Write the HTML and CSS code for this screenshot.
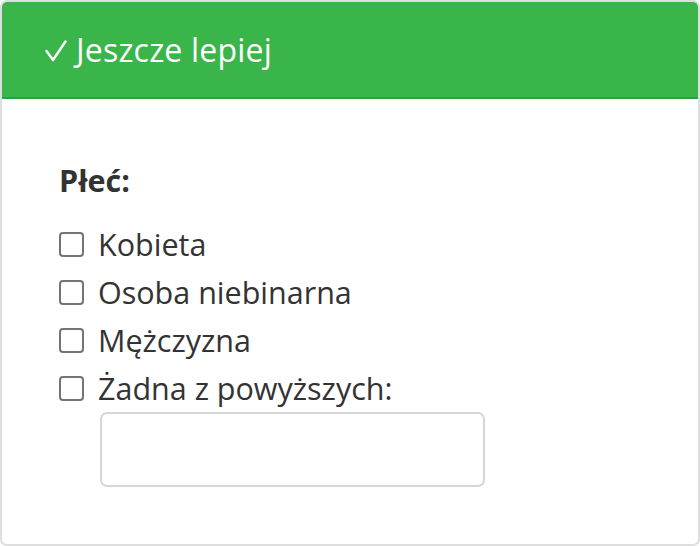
FILE: index.html
```html
<!DOCTYPE html>
<html lang="pl">
<head>
<meta charset="utf-8">
<link rel="stylesheet" href="styles.css">
</head>
<body>
<div class="card">
  <div class="card-header">
    <svg class="check" width="22" height="22" viewBox="0 0 22 22"><polyline points="1.5,11 8,20 20.5,1.5" fill="none" stroke="#fff" stroke-width="2.4" stroke-linecap="round" stroke-linejoin="round"/></svg>
    <span>Jeszcze lepiej</span>
  </div>
  <div class="card-body">
    <div class="legend">Płeć:</div>
    <label class="opt"><span class="box"></span>Kobieta</label>
    <label class="opt"><span class="box"></span>Osoba niebinarna</label>
    <label class="opt"><span class="box"></span>Mężczyzna</label>
    <label class="opt"><span class="box"></span>Żadna z powyższych:</label>
    <div class="other"><div class="input"></div></div>
  </div>
</div>
</body>
</html>
```

FILE: styles.css
```css
html, body { margin: 0; padding: 0; background: #fff; }
body { font-family: "Open Sans", "Noto Sans", sans-serif; color: #333; }
.card {
  width: 700px;
  height: 546px;
  box-sizing: border-box;
  border: 2px solid #dedede;
  border-radius: 7px;
  overflow: hidden;
}
.card-header {
  height: 95px;
  background: #39b54a;
  border-bottom: 2px solid #2e9e3e;
  display: flex;
  align-items: center;
  gap: 9px;
  padding-left: 43px;
  color: #fff;
  font-size: 32px;
  letter-spacing: 0.2px;
}
.check { display: block; margin-top: 2px; }
.card-body {
  padding: 57px 56px 0 57px;
  font-size: 30.5px;
  line-height: 48px;
}
.legend { font-weight: 700; margin-bottom: 16px; }
.opt { display: flex; align-items: center; }
.box {
  width: 21px;
  height: 21px;
  border: 2px solid #747474;
  border-radius: 4px;
  margin-right: 14px;
  flex: none;
}
.other { padding-left: 41px; }
.input {
  width: 381px;
  height: 71px;
  border: 2px solid #d3d6da;
  border-radius: 7px;
}
```
